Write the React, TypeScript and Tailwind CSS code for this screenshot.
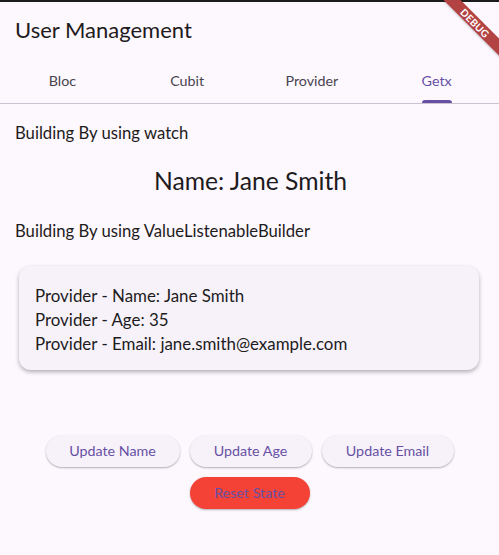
import React from "react";

const font = { fontFamily: 'Lato, "Noto Sans", sans-serif' };

export default function App() {
  const tabs = ["Bloc", "Cubit", "Provider", "Getx"];
  return (
    <div className="relative w-[499px] h-[555px] overflow-hidden bg-[#fdf7fe] text-[#1d1b20]" style={font}>
      <div className="h-[2px] bg-[#1c1c1c]" />
      <div className="h-[56px] flex items-center px-[15px]">
        <span className="text-[22px] leading-[28px]">User Management</span>
      </div>
      <div className="grid grid-cols-4 h-[46px] border-b border-[#cac4d0]">
        {tabs.map((t, i) => (
          <div key={t} className="relative flex items-center justify-center">
            <span className={`text-[14.3px] ${i === 3 ? "text-[#6750a4]" : "text-[#49454f]"}`}>{t}</span>
            {i === 3 && (
              <div className="absolute bottom-0 left-1/2 -translate-x-1/2 w-[30px] h-[3px] rounded-t-[3px] bg-[#6750a4]" />
            )}
          </div>
        ))}
      </div>
      <div className="px-[15px] pt-[17px]">
        <div className="text-[16.7px] leading-[24px] h-[24px]">Building By using watch</div>
        <div className="mt-[20px] text-center text-[24.7px] leading-[32px] pl-[2px]">Name: Jane Smith</div>
        <div className="mt-[22px] text-[16.7px] leading-[24px]">Building By using ValueListenableBuilder</div>
      </div>
      <div className="mx-[19px] mt-[23px] w-[460px] h-[104px] rounded-[12px] bg-[#f7f2fa] shadow-[0_2px_4px_rgba(0,0,0,0.3)] px-[16px] py-[18px] text-[16.9px] leading-[24px]">
        <div>Provider - Name: Jane Smith</div>
        <div>Provider - Age: 35</div>
        <div>Provider - Email: jane.smith@example.com</div>
      </div>
      <div className="mt-[65px] flex flex-col items-center gap-[10px]">
        <div className="flex gap-[10px]">
          {["Update Name", "Update Age", "Update Email"].map((b, i) => (
            <button
              key={b}
              className={`h-[32px] rounded-full bg-[#f7f2fa] text-[#6750a4] text-[14.3px] shadow-[0_1px_2px_rgba(0,0,0,0.3)] ${
                i === 0 ? "w-[134px]" : i === 1 ? "w-[122px]" : "w-[132px]"
              }`}
            >
              {b}
            </button>
          ))}
        </div>
        <button className="h-[32px] w-[120px] rounded-full bg-[#f44336] text-[#6750a4] text-[14.3px] shadow-[0_1px_2px_rgba(0,0,0,0.3)]">
          Reset State
        </button>
      </div>
      <div className="absolute top-[17px] right-[-32px] w-[112px] h-[12px] rotate-45 bg-[#b34242] flex items-center justify-center shadow-[0_1px_2px_rgba(0,0,0,0.2)]">
        <span className="text-white text-[10px] font-bold leading-none tracking-[0.3px]">DEBUG</span>
      </div>
    </div>
  );
}
